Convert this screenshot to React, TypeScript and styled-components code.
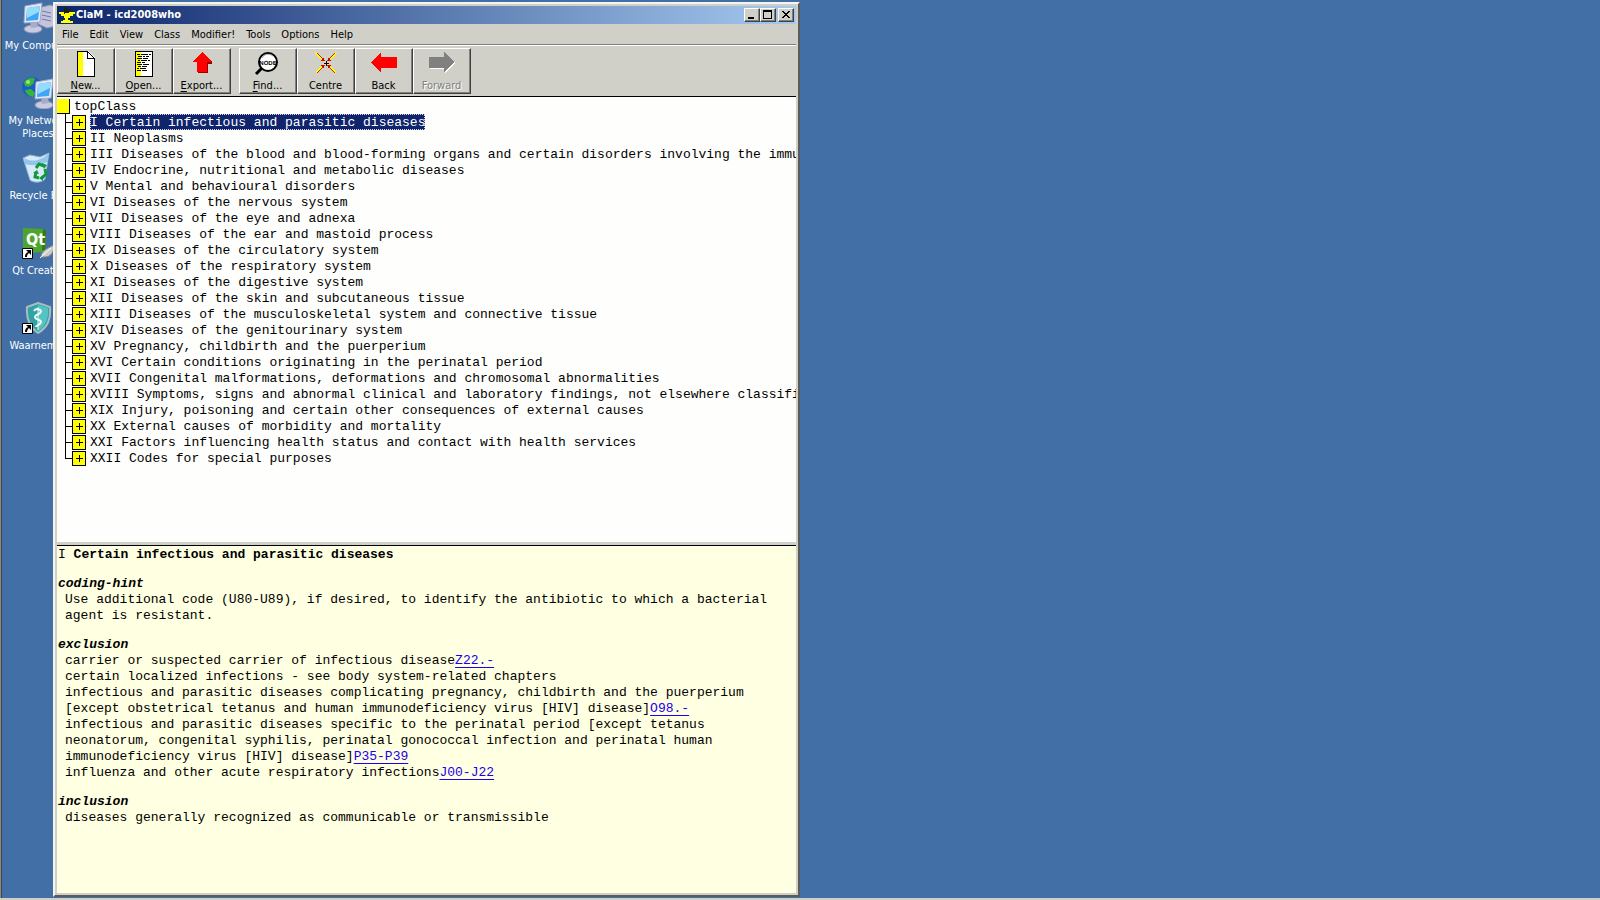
import React from "react";
import styled, { createGlobalStyle } from "styled-components";

const face = "#d1d0c8";
const ui = `"DejaVu Sans Condensed", "DejaVu Sans", "Liberation Sans", sans-serif`;
const mono = `"Liberation Mono", "DejaVu Sans Mono", monospace`;

const GlobalStyle = createGlobalStyle`
  * { box-sizing: border-box; }
  html, body { margin: 0; height: 100%; }
  #root { height: 100%; }
  button { font: inherit; color: inherit; margin: 0; }
`;

const Desktop = styled.main`
  position: relative;
  height: 100vh;
  overflow: hidden;
  background: #416fa6;
  box-shadow: inset 0 -2px ${face}, inset 1px 0 #8a8a86, inset 2px 0 #404448;
  font: 11px/13px ${ui};
`;

const Shortcuts = styled.nav`
  width: 76px;
  padding-top: 2px;
  display: grid;
  grid-auto-rows: 75px;
`;

const Shortcut = styled.button`
  display: flex;
  flex-direction: column;
  align-items: center;
  gap: 5px;
  padding: 0;
  border: 0;
  background: none;
  color: #fff;
  text-align: center;
  font-size: 11px;
  svg { flex: none; }
`;

/* The window floats over the desktop and reaches to its middle. */
const Window = styled.section`
  position: absolute;
  left: 53px;
  top: 2px;
  right: 50%;
  bottom: 3px;
  display: flex;
  flex-direction: column;
  padding: 2px;
  background: ${face};
  border: 2px solid;
  border-color: #f4f4f0 #5c5c58 #5c5c58 #f4f4f0;
`;

const TitleBar = styled.header`
  display: flex;
  align-items: center;
  height: 18px;
  flex: none;
  padding: 0 2px;
  background: linear-gradient(90deg, #0a246a, #a6caf0);
  color: #fff;
`;

const Title = styled.h1`
  flex: 1;
  margin: 0 0 0 1px;
  font: bold 11px/18px ${ui};
`;

const Caption = styled.button<{ $apart?: boolean }>`
  width: 16px;
  height: 14px;
  margin-left: ${(p) => (p.$apart ? 2 : 0)}px;
  padding: 0;
  display: flex;
  background: ${face};
  border: 1px solid;
  border-color: #fff #404040 #404040 #fff;
  box-shadow: inset -1px -1px #808080;
`;

const MenuBar = styled.nav`
  display: flex;
  flex: none;
  height: 22px;
  border-bottom: 1px solid #fff;
  box-shadow: inset 0 -1px #808080;
`;

const MenuItem = styled.button`
  padding: 0 6px 0 5px;
  border: 0;
  background: none;
`;

const ToolBar = styled.div`
  display: flex;
  flex: none;
  gap: 8px;
  padding: 2px 0;
  border-bottom: 1px solid #000;
`;

const ToolGroup = styled.div`
  display: flex;
`;

const Tool = styled.button`
  width: 58px;
  height: 46px;
  padding: 1px 1px 0 0;
  display: flex;
  flex-direction: column;
  align-items: center;
  gap: 1px;
  background: ${face};
  border: 1px solid;
  border-color: #fff #404040 #404040 #fff;
  box-shadow: inset -1px -1px #808080;
  svg { flex: none; }
  u { text-decoration-thickness: 1px; text-underline-offset: 2px; }
  &:disabled { color: #808080; text-shadow: 1px 1px #fff; }
`;

const TreePane = styled.div`
  flex: 445 1 0;
  min-height: 0;
  overflow: hidden;
  padding-top: 1px;
  background: #fefefc;
  color: #000;
  font: 13px/18px ${mono};
`;

const Root = styled.div`
  display: flex;
  gap: 4px;
  height: 16px;
`;

const RootBox = styled.span`
  width: 13px;
  height: 15px;
  margin-top: 1px;
  background: #ff0;
  border: 1px solid #000;
  border-width: 0 1px 1px 0;
`;

const Branches = styled.ul`
  list-style: none;
  margin: 0;
  padding: 0 0 0 8px;
`;

const Branch = styled.li`
  display: flex;
  height: 16px;
  white-space: nowrap;
`;

const Connector = styled.span<{ $last: boolean }>`
  flex: none;
  width: 7px;
  background:
    linear-gradient(#000, #000) 0 0 / 1px ${(p) => (p.$last ? "9px" : "100%")} no-repeat,
    linear-gradient(#000, #000) 0 8px / 100% 1px no-repeat;
`;

const Toggle = styled.button`
  flex: none;
  width: 14px;
  height: 15px;
  margin-top: 1px;
  margin-right: 4px;
  padding: 0;
  display: grid;
  place-items: center;
  background: #ff0;
  border: 1px solid #000;
`;

const BranchLabel = styled.span<{ $selected: boolean }>`
  ${(p) =>
    p.$selected &&
    "background: #0f246b; color: #fff; outline: 1px dotted #d8d8e8; outline-offset: -1px;"}
`;

const Splitter = styled.div`
  flex: none;
  height: 4px;
  background: ${face};
  border-bottom: 1px solid #000;
`;

const DetailPane = styled.article`
  flex: 347 1 0;
  min-height: 0;
  overflow: hidden;
  padding: 1px 1px 0;
  background: #ffffe1;
  color: #000;
  font: 13px/16px ${mono};
`;

const DetailTitle = styled.h2`
  margin: 0;
  font: inherit;
`;

const Rubric = styled.section`
  margin-top: 13px;
`;

const RubricName = styled.h3`
  margin: 0;
  font: italic bold 13px/16px ${mono};
`;

const Note = styled.p`
  margin: 0 0 0 7px;
`;

const Code = styled.a`
  color: #1a00f0;
  text-decoration: underline 1px;
  text-underline-offset: 3px;
`;

const Monitor = ({ x, y }: { x: number; y: number }) => (
  <g transform={`translate(${x} ${y})`}>
    <ellipse cx="11" cy="26" rx="9" ry="4" fill="#c9cbe0" stroke="#9093b4" />
    <path d="M8 19l7-1 1 6-7 1z" fill="#a9abc8" />
    <path d="M3 3l17-3-2 19-16 1z" fill="#e7eaf6" stroke="#a3a8c9" />
    <path d="M5 5l13-2-2 14-12 1z" fill="#3ea6f4" />
    <path d="M5 5l13-2-1 6-12 6z" fill="#93dcfc" />
  </g>
);

const ComputerIcon = () => (
  <svg width="32" height="32">
    <path d="M16 6l12-3 10 3v17l-13 3-9-4z" fill="#c3c5df" stroke="#8f92b8" />
    <path d="M20 9l9 2M20 13l9 2M20 17l9 2" stroke="#7477a4" />
    <Monitor x={0} y={1} />
  </svg>
);

const NetworkIcon = () => (
  <svg width="32" height="32">
    <circle cx="10" cy="10" r="10" fill="#1c5cc4" />
    <path d="M2 5c4-5 9-5 11-3l-2 5-4 3-4-1zM3 13l6-1 4 4-2 4c-4-1-7-3-8-7z" fill="#35b53a" />
    <circle cx="6" cy="5" r="2" fill="#a4e66a" />
    <Monitor x={11} y={2} />
  </svg>
);

const RecycleIcon = () => (
  <svg width="32" height="32">
    <path d="M1 6l7-3 10 2 9-4-4 26c-3 4-12 4-15 1z" fill="#d6eaf8" stroke="#86b4d8" />
    <path d="M2 6c7 4 16 4 25-5l-2 9c-7 4-15 4-22 2z" fill="#92c5ec" />
    <path d="M14 16l3-4 5 2M23 17l1 5-4 4M17 26l-4-1 1-5" fill="none" stroke="#12983a" strokeWidth="3" />
    <path d="M20 11l5 2-3 4zM21 23v6l-4-3zM11 21l4-3 2 4z" fill="#12983a" />
  </svg>
);

const ShortcutArrow = () => (
  <g>
    <path d="M.5 21.500h10v10h-10z" fill="#fff" stroke="#000" />
    <path d="M4 23h5v5l-2-2c-1 1-2 2-2 4H3c0-3 1-4 3-5z" fill="#000" />
  </g>
);

const QtIcon = () => (
  <svg width="32" height="32">
    <path d="M1 1l20 1 3 2-1 21-16 1-6-4z" fill="#4ea52c" />
    <path d="M21 2l3 2-1 21-3-2z" fill="#2f7a18" />
    <text x="4" y="18" fill="#fff" fontSize="16" fontWeight="bold" fontFamily="DejaVu Sans Condensed">Qt</text>
    <path d="M19 30c0-6 5-8 13-12 0 7-3 12-9 12z" fill="#c9ccc9" stroke="#808680" />
    <path d="M18 31l11-10" stroke="#fff" />
    <ShortcutArrow />
  </svg>
);

const ShieldIcon = () => (
  <svg width="32" height="32">
    <path d="M16 1l12 4c1 12-2 20-12 26C7 25 4 17 5 5z" fill="#2fa3a5" stroke="#a9bcc0" strokeWidth="2" />
    <path d="M16 3l10 3c1 9-2 18-10 23z" fill="#55c3c2" />
    <path d="M16 5v23" stroke="#e6f5f5" />
    <path d="M12 9c2-3 6-2 7 0 0 4-6 3-6 6s6 2 6 5-5 3-5 5" fill="none" stroke="#f3fbfb" strokeWidth="2" />
    <ShortcutArrow />
  </svg>
);

const CupIcon = () => (
  <svg width="16" height="16" shapeRendering="crispEdges">
    <path d="M0 5h16v2h-2v2h-3v2H9v2h2v1h3v2H2v-2h2v-1h2v-2H5V9H2V7H0z" fill="#ff0" />
    <path d="M5 0h1v1h2v1h4v1h-2v3H6v1H5z" fill="#222208" />
  </svg>
);

const NewIcon = () => (
  <svg width="32" height="28" shapeRendering="crispEdges">
    <path d="M7 1h11l7 7v19H7z" fill="#fff" />
    <path d="M7 1h6v26H7z" fill="#ff0" />
    <path d="M7.500 1.500H17.500L24.500 8.500V26.500H7.500zM17.500 1.500V8.500H24.500" fill="none" stroke="#000" />
  </svg>
);

const OpenIcon = () => (
  <svg width="32" height="28" shapeRendering="crispEdges">
    <path d="M7 1h18v26H7z" fill="#fff" />
    <path d="M7 1h6v26H7z" fill="#ff0" />
    <path d="M7.500 1.500h17v25h-17z" fill="none" stroke="#000" />
    <path
      d="M9 4.500h3m1 0h7m1 0h2M10 6.500h4m1 0h2m1 0h3M9 8.500h5m1 0h5M10 10.500h2m1 0h6m1 0h2M9 12.500h4m1 0h3M9 14.500h5m1 0h6M10 16.500h3m1 0h5M9 18.500h2m1 0h6M9 20.500h4m1 0h5"
      stroke="#000"
    />
  </svg>
);

const ExportIcon = () => (
  <svg width="32" height="28" shapeRendering="crispEdges">
    <path d="M17 3l9 9v2h-4v9H12v-1z" fill="#900" />
    <path d="M16 2l9 9v1h-4v10H11V12H7v-1z" fill="#f00" />
  </svg>
);

const FindIcon = () => (
  <svg width="32" height="28">
    <path d="M10 18L4 24" stroke="#000" strokeWidth="3" />
    <circle cx="16" cy="12" r="9" fill="#fff" stroke="#000" strokeWidth="2" />
    <path d="M10 8c2-4 7-5 11-2" stroke="#999" fill="none" />
    <text x="16" y="15" textAnchor="middle" fontSize="6" fontWeight="bold" fontFamily="Liberation Sans" textRendering="geometricPrecision">
      NODE
    </text>
  </svg>
);

const CentreIcon = () => (
  <svg width="32" height="28" shapeRendering="crispEdges">
    <path d="M6 3l8 8M26 3l-8 8M6 23l8-8M26 23l-8-8" stroke="#ff0" strokeWidth="2" />
    <path d="M7 3l8 8M25 3l-8 8M7 23l8-8M25 23l-8-8" stroke="#d22000" />
    <path d="M14 11V7l-3 4zM18 11V7l3 4zM14 15v4l-3-4zM18 15v4l3-4z" fill="#d00000" />
    <path d="M14 13h5v1h-5zM16 11h1v5h-1z" fill="#000" />
  </svg>
);

const BackIcon = () => (
  <svg width="32" height="28" shapeRendering="crispEdges">
    <path d="M3 12l10-10v5h16v11H13v5z" fill="#f00" />
  </svg>
);

const ForwardIcon = () => (
  <svg width="32" height="28" shapeRendering="crispEdges">
    <path d="M29 13L19 3v5H4v11h15v5z" fill="#fff" />
    <path d="M28 12L18 2v5H3v11h15v5z" fill="#808080" />
  </svg>
);

const shortcuts = [
  { name: "My Computer", Icon: ComputerIcon },
  { name: "My Network Places", Icon: NetworkIcon },
  { name: "Recycle Bin", Icon: RecycleIcon },
  { name: "Qt Creator", Icon: QtIcon },
  { name: "Waarnemer", Icon: ShieldIcon },
];

const menus = ["File", "Edit", "View", "Class", "Modifier!", "Tools", "Options", "Help"];

interface ToolSpec {
  mnemonic?: string;
  label: string;
  Icon: () => React.JSX.Element;
  disabled?: boolean;
}

const toolGroups: ToolSpec[][] = [
  [
    { mnemonic: "N", label: "ew...", Icon: NewIcon },
    { mnemonic: "O", label: "pen...", Icon: OpenIcon },
    { mnemonic: "E", label: "xport...", Icon: ExportIcon },
  ],
  [
    { mnemonic: "F", label: "ind...", Icon: FindIcon },
    { label: "Centre", Icon: CentreIcon },
    { label: "Back", Icon: BackIcon },
    { label: "Forward", Icon: ForwardIcon, disabled: true },
  ],
];

const chapters = [
  "I Certain infectious and parasitic diseases",
  "II Neoplasms",
  "III Diseases of the blood and blood-forming organs and certain disorders involving the immune mechanism",
  "IV Endocrine, nutritional and metabolic diseases",
  "V Mental and behavioural disorders",
  "VI Diseases of the nervous system",
  "VII Diseases of the eye and adnexa",
  "VIII Diseases of the ear and mastoid process",
  "IX Diseases of the circulatory system",
  "X Diseases of the respiratory system",
  "XI Diseases of the digestive system",
  "XII Diseases of the skin and subcutaneous tissue",
  "XIII Diseases of the musculoskeletal system and connective tissue",
  "XIV Diseases of the genitourinary system",
  "XV Pregnancy, childbirth and the puerperium",
  "XVI Certain conditions originating in the perinatal period",
  "XVII Congenital malformations, deformations and chromosomal abnormalities",
  "XVIII Symptoms, signs and abnormal clinical and laboratory findings, not elsewhere classified",
  "XIX Injury, poisoning and certain other consequences of external causes",
  "XX External causes of morbidity and mortality",
  "XXI Factors influencing health status and contact with health services",
  "XXII Codes for special purposes",
];

const rubrics: { name: string; notes: { text: string; code?: string }[] }[] = [
  {
    name: "coding-hint",
    notes: [
      {
        text: "Use additional code (U80-U89), if desired, to identify the antibiotic to which a bacterial agent is resistant.",
      },
    ],
  },
  {
    name: "exclusion",
    notes: [
      { text: "carrier or suspected carrier of infectious disease", code: "Z22.-" },
      { text: "certain localized infections - see body system-related chapters" },
      {
        text: "infectious and parasitic diseases complicating pregnancy, childbirth and the puerperium [except obstetrical tetanus and human immunodeficiency virus [HIV] disease]",
        code: "O98.-",
      },
      {
        text: "infectious and parasitic diseases specific to the perinatal period [except tetanus neonatorum, congenital syphilis, perinatal gonococcal infection and perinatal human immunodeficiency virus [HIV] disease]",
        code: "P35-P39",
      },
      { text: "influenza and other acute respiratory infections", code: "J00-J22" },
    ],
  },
  {
    name: "inclusion",
    notes: [{ text: "diseases generally recognized as communicable or transmissible" }],
  },
];

export default function App() {
  return (
    <>
      <GlobalStyle />
      <Desktop>
        <Shortcuts>
          {shortcuts.map(({ name, Icon }) => (
            <Shortcut key={name}>
              <Icon />
              {name}
            </Shortcut>
          ))}
        </Shortcuts>
        <Window>
          <TitleBar>
            <CupIcon />
            <Title>ClaM - icd2008who</Title>
            <Caption aria-label="Minimize">
              <svg width="14" height="12" shapeRendering="crispEdges">
                <path d="M3 8h6v2H3z" />
              </svg>
            </Caption>
            <Caption aria-label="Maximize">
              <svg width="14" height="12" shapeRendering="crispEdges">
                <path d="M2 1h9v9H2zM3 3v6h7V3z" fillRule="evenodd" />
              </svg>
            </Caption>
            <Caption aria-label="Close" $apart>
              <svg width="14" height="12" shapeRendering="crispEdges">
                <path d="M3 2h2v1h1v1h2V3h1V2h2v1h-1v1H9v1H8v1h1v1h1v1h1v1H9V8H8V7H6v1H5v1H3V8h1V7h1V6h1V5H5V4H4V3H3z" />
              </svg>
            </Caption>
          </TitleBar>
          <MenuBar>
            {menus.map((m) => (
              <MenuItem key={m}>{m}</MenuItem>
            ))}
          </MenuBar>
          <ToolBar>
            {toolGroups.map((group, i) => (
              <ToolGroup key={i}>
                {group.map(({ mnemonic, label, Icon, disabled }) => (
                  <Tool key={label} disabled={disabled}>
                    <Icon />
                    <span>
                      {mnemonic && <u>{mnemonic}</u>}
                      {label}
                    </span>
                  </Tool>
                ))}
              </ToolGroup>
            ))}
          </ToolBar>
          <TreePane>
            <Root>
              <RootBox />
              topClass
            </Root>
            <Branches>
              {chapters.map((c, i) => (
                <Branch key={c}>
                  <Connector $last={i === chapters.length - 1} />
                  <Toggle aria-label="Expand">
                    <svg width="8" height="7" shapeRendering="crispEdges">
                      <path d="M1 3h7v1H1zM4 0h1v7H4z" />
                    </svg>
                  </Toggle>
                  <BranchLabel $selected={i === 0}>{c}</BranchLabel>
                </Branch>
              ))}
            </Branches>
          </TreePane>
          <Splitter />
          <DetailPane>
            <DetailTitle>
              I <b>Certain infectious and parasitic diseases</b>
            </DetailTitle>
            {rubrics.map((r) => (
              <Rubric key={r.name}>
                <RubricName>{r.name}</RubricName>
                {r.notes.map((n) => (
                  <Note key={n.text}>
                    {n.text}
                    {n.code && <Code href={`#${n.code}`}>{n.code}</Code>}
                  </Note>
                ))}
              </Rubric>
            ))}
          </DetailPane>
        </Window>
      </Desktop>
    </>
  );
}
